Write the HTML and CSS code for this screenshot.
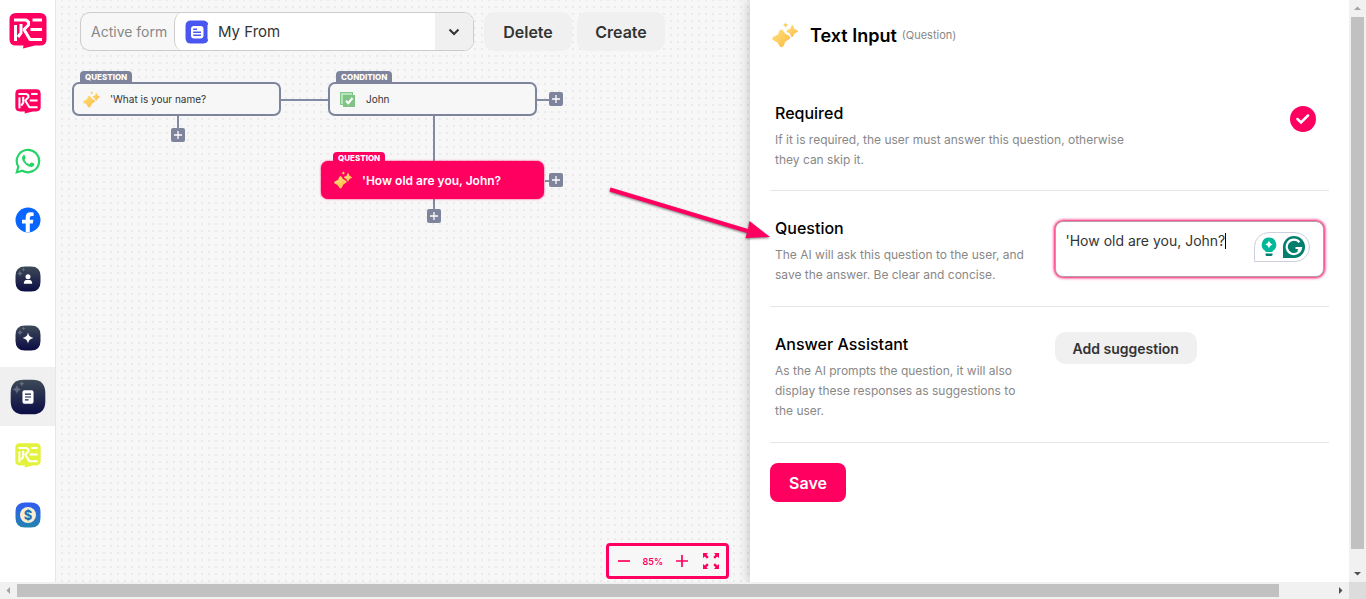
FILE: index.html
```
<!DOCTYPE html>
<html lang="en">
<head>
    <meta charset="UTF-8">
    <meta name="viewport" content="width=device-width, initial-scale=1.0">
    <title>Form Builder</title>
    <link rel="stylesheet" href="styles.css">
</head>
<body>
    <!-- Shared icons -->
    <svg class="sprite" aria-hidden="true">
        <defs>
            <linearGradient id="gold" x1="0" y1="0" x2="1" y2="1">
                <stop offset="0" stop-color="#ffe27a"/>
                <stop offset="1" stop-color="#fcb945"/>
            </linearGradient>
            <linearGradient id="night" x1="0" y1="0" x2="0" y2="1">
                <stop offset="0" stop-color="#3d4a57"/>
                <stop offset="1" stop-color="#0b0c45"/>
            </linearGradient>
            <linearGradient id="ocean" x1="0" y1="0" x2="0" y2="1">
                <stop offset="0" stop-color="#2f5bf5"/>
                <stop offset="1" stop-color="#2383ad"/>
            </linearGradient>
            <symbol id="logo" viewBox="0 0 38 36">
                <path d="M7 0H31Q37.500 0 37.500 6.500V26.500Q37.500 32.500 31 32.500H26L14 35.500L14.500 32.500H7Q.5 32.500 .5 26.500V6.500Q.5 0 7 0Z" fill="currentColor"/>
                <g fill="none" stroke="#fff" stroke-width="3">
                    <polyline points="5,7 17,7 19.500,9 19.500,12 15,16.500 21,26.500 33,26.500" stroke-linejoin="round"/>
                    <polyline points="6.500,12 6.500,28"/>
                    <polyline points="12,11 12,20 9,24"/>
                    <polyline points="33,7 23.500,7"/>
                    <polyline points="21.500,16.500 33,16.500"/>
                </g>
            </symbol>
            <symbol id="sparkles" viewBox="0 0 26 26">
                <path d="M9 7.500Q10 7 11 8.500L13 11.500L17.500 14Q19 15.500 17.500 17L13.500 19.500L11.500 24Q9.500 26.500 7.500 24L5.500 20.500L1 18Q-.5 16.500 1 15L6 12.500L7.500 8.500Z" fill="url(#gold)"/>
                <path d="M20 3Q20.700 2.500 21.300 4L22.500 7L25.500 8.500Q26.500 9.200 25.500 10L22.500 11.500L21 14.500Q20 15.500 19.200 14.500L17.800 11.500L15 10Q14 9 15 8.200L18.200 6.800Z" fill="url(#gold)"/>
                <path d="M13.500 .5L14.500 2L16 3L14.500 4L13.500 5.500L12.500 4L11 3L12.500 2Z" fill="#ffd25e"/>
            </symbol>
            <symbol id="night-tile" viewBox="0 0 26 26">
                <path d="M10 .5H16Q25.500 .5 25.500 10V16Q25.500 25.500 16 25.500H10Q.5 25.500 .5 16V10Q.5 .5 10 .5Z" fill="url(#night)"/>
                <path d="M5 4Q5.300 7.200 8.500 7.500Q5.300 7.800 5 11Q4.700 7.800 1.500 7.500Q4.700 7.200 5 4ZM8.500 1.500Q8.700 3.300 10.500 3.500Q8.700 3.700 8.500 5.500Q8.300 3.700 6.500 3.500Q8.300 3.300 8.500 1.500Z" fill="#fff" opacity=".25"/>
            </symbol>
            <symbol id="plus" viewBox="0 0 14 14">
                <path d="M7 3V11M3 7H11" stroke="currentColor" stroke-width="1.300"/>
            </symbol>
        </defs>
    </svg>

    <div class="window">
        <div class="app">
            <!-- Side navigation -->
            <aside class="sidebar">
                <a class="brand" href="#" aria-label="Home"><svg width="38" height="36"><use href="#logo"/></svg></a>
                <nav class="nav">
                    <a href="#" aria-label="Workspace" class="brand-pink"><svg width="26" height="25"><use href="#logo"/></svg></a>
                    <a href="#" aria-label="WhatsApp">
                        <svg width="26" height="26" viewBox="0 0 26 26">
                            <path d="M1.800 24.300L3.300 18.700A11.200 11.200 0 1 1 7.500 22.800Z" fill="none" stroke="#25d366" stroke-width="2.200"/>
                            <path d="M9 6.800Q7 7.500 7 10C7 14 12.500 19 16.500 19Q19 18.800 19.300 16.500Q19.400 15.800 19 15.600L16.600 14.500Q16.100 14.300 15.700 14.800L14.800 16Q14.500 16.300 14 16.100Q11 15 9.700 12.200Q9.500 11.800 9.800 11.500L10.600 10.500Q10.800 10.200 10.600 9.700L9.700 7.300Q9.500 6.800 9 6.800Z" fill="#25d366"/>
                        </svg>
                    </a>
                    <a href="#" aria-label="Facebook">
                        <svg width="26" height="26" viewBox="0 0 26 26">
                            <circle cx="13" cy="13" r="12.500" fill="#0866ff"/>
                            <path d="M10.700 25.300V16.500H7V12.800H10.700V10.500Q10.700 5.300 15.600 5.300Q17.300 5.300 18.600 5.600V8.900H16.800Q14.800 8.900 14.800 11V12.800H18.400L17.800 16.500H14.800V25.300Z" fill="#fff"/>
                        </svg>
                    </a>
                    <a href="#" aria-label="Contacts">
                        <svg width="26" height="26" viewBox="0 0 26 26">
                            <use href="#night-tile"/>
                            <circle cx="13" cy="10.700" r="2.500" fill="#fff"/>
                            <path d="M8.800 17.800Q8.800 14 11.500 14H14.500Q17.200 14 17.200 17.800Z" fill="#fff"/>
                        </svg>
                    </a>
                    <a href="#" aria-label="Assistant">
                        <svg width="26" height="26" viewBox="0 0 26 26">
                            <use href="#night-tile"/>
                            <path d="M13 7.500Q13.800 12.200 18.500 13Q13.800 13.800 13 18.500Q12.200 13.800 7.500 13Q12.200 12.200 13 7.500Z" fill="#fff"/>
                        </svg>
                    </a>
                    <a href="#" aria-label="Forms" class="active" aria-current="page">
                        <svg width="36" height="36" viewBox="0 0 26 26">
                            <use href="#night-tile"/>
                            <rect x="9" y="8.200" width="8" height="9.600" rx="1.400" fill="#fff"/>
                            <path d="M10.800 10.900H15.200M10.800 13H15.200M10.800 15.100H13.400" stroke="#16204d" stroke-width=".8"/>
                        </svg>
                    </a>
                    <a href="#" aria-label="Brand" class="brand-lime"><svg width="26" height="25"><use href="#logo"/></svg></a>
                    <a href="#" aria-label="Billing">
                        <svg width="26" height="26" viewBox="0 0 26 26">
                            <path d="M10 .5H16Q25.500 .5 25.500 10V16Q25.500 25.500 16 25.500H10Q.5 25.500 .5 16V10Q.5 .5 10 .5Z" fill="url(#ocean)"/>
                            <circle cx="13" cy="13" r="8" fill="#fbedd0"/>
                            <text x="13" y="17.500" text-anchor="middle" class="coin">$</text>
                        </svg>
                    </a>
                </nav>
            </aside>

            <!-- Flow canvas -->
            <main class="canvas">
                <div class="toolbar">
                    <div class="form-picker">
                        <label for="active-form">Active form</label>
                        <div class="picker-field">
                            <svg class="picker-icon" width="24" height="24" viewBox="0 0 24 24">
                                <path d="M6 .5H18Q22 .5 23.300 4Q22 5 22.500 7V17Q22 19 23.300 20Q22 23.500 18 23.500H6Q.5 23.500 .5 18V6Q.5 .5 6 .5Z" fill="#4a56f0"/>
                                <rect x="6" y="6" width="12.500" height="12.500" rx="3" fill="#fff"/>
                                <path d="M8.200 9.300H12M8.200 12.200H16M8.200 15.200H16" stroke="#4a56f0" stroke-width="1.400"/>
                            </svg>
                            <select id="active-form">
                                <option>My From</option>
                            </select>
                            <span class="chevron">
                                <svg width="12" height="8" viewBox="0 0 12 8"><path d="M1.500 1.500L6 6L10.500 1.500" fill="none" stroke="#333" stroke-width="2"/></svg>
                            </span>
                        </div>
                    </div>
                    <button type="button" class="btn">Delete</button>
                    <button type="button" class="btn">Create</button>
                </div>

                <div class="board">
                    <svg class="wires" width="520" height="240" fill="none" stroke="#838aa3" stroke-width="2">
                        <path d="M225 100H272M481 100H493M489 181H493M122 116V128M378 116V161M378 199V209"/>
                    </svg>

                    <div class="node node-name">
                        <span class="tag">QUESTION</span>
                        <svg width="17" height="17"><use href="#sparkles"/></svg>
                        <span>'What is your name?</span>
                    </div>
                    <div class="node node-john">
                        <span class="tag">CONDITION</span>
                        <svg width="17" height="17" viewBox="0 0 17 17">
                            <rect x="1.500" y="1.500" width="12" height="12" fill="#b9e3bd" stroke="#7fca88"/>
                            <rect x="4" y="4" width="12" height="12" fill="#7fc486"/>
                            <path d="M7 9.800L9.300 12.200L13.500 7" fill="none" stroke="#fff" stroke-width="2"/>
                        </svg>
                        <span>John</span>
                    </div>
                    <div class="node node-age selected">
                        <span class="tag">QUESTION</span>
                        <svg width="18" height="18"><use href="#sparkles"/></svg>
                        <span>'How old are you, John?</span>
                    </div>

                    <button type="button" class="add add-name-below" aria-label="Add step"><svg width="14" height="14"><use href="#plus"/></svg></button>
                    <button type="button" class="add add-john-right" aria-label="Add step"><svg width="14" height="14"><use href="#plus"/></svg></button>
                    <button type="button" class="add add-age-right" aria-label="Add step"><svg width="14" height="14"><use href="#plus"/></svg></button>
                    <button type="button" class="add add-age-below" aria-label="Add step"><svg width="14" height="14"><use href="#plus"/></svg></button>
                </div>

                <div class="zoom">
                    <button type="button" aria-label="Zoom out"><svg width="14" height="14" viewBox="0 0 14 14"><path d="M1 7H13" stroke="currentColor" stroke-width="1.700"/></svg></button>
                    <span>85%</span>
                    <button type="button" aria-label="Zoom in"><svg width="14" height="14" viewBox="0 0 14 14"><path d="M1 7H13M7 1V13" stroke="currentColor" stroke-width="1.700"/></svg></button>
                    <button type="button" class="fit" aria-label="Fit to screen">
                        <svg width="16" height="16" viewBox="0 0 16 16">
                            <path d="M0 0H5L3.500 1.800L5.700 4L4 5.700L1.800 3.500L0 5ZM16 0V5L14.200 3.500L12 5.700L10.300 4L12.500 1.800L11 0ZM0 16V11L1.800 12.500L4 10.300L5.700 12L3.500 14.200L5 16ZM16 16H11L12.500 14.200L10.300 12L12 10.300L14.200 12.500L16 11Z" fill="currentColor"/>
                        </svg>
                    </button>
                </div>
            </main>

            <!-- Node settings -->
            <form class="panel">
                <header class="panel-header">
                    <svg width="26" height="26"><use href="#sparkles"/></svg>
                    <h1>Text Input</h1>
                    <small>(Question)</small>
                </header>

                <section class="field field-wide">
                    <div>
                        <h2><label for="required">Required</label></h2>
                        <p>If it is required, the user must answer this question, otherwise they can skip it.</p>
                    </div>
                    <div class="check">
                        <input type="checkbox" id="required" checked>
                        <svg width="14" height="12" viewBox="0 0 14 12"><path d="M1.500 6L5 9.500L12 2.500" fill="none" stroke="#fff" stroke-width="2.500" stroke-linecap="round"/></svg>
                    </div>
                </section>

                <section class="field">
                    <div>
                        <h2><label for="question">Question</label></h2>
                        <p>The AI will ask this question to the user, and save the answer. Be clear and concise.</p>
                    </div>
                    <div class="question-box">
                        <textarea id="question">'How old are you, John?</textarea>
                        <span class="caret"></span>
                        <div class="writing-tools">
                            <svg width="16" height="20" viewBox="0 0 16 20">
                                <path d="M8 .5A7.200 7.200 0 0 1 11.500 14V15H4.500V14A7.200 7.200 0 0 1 8 .5Z" fill="#00b899"/>
                                <path d="M4.500 16.500H11.500V17.500Q11.500 19 10 19H6Q4.500 19 4.500 17.500Z" fill="#007f70"/>
                                <path d="M8 3.800Q8.800 6.700 11.700 7.500Q8.800 8.300 8 11.200Q7.200 8.300 4.300 7.500Q7.200 6.700 8 3.800Z" fill="#fff"/>
                            </svg>
                            <svg width="24" height="24" viewBox="0 0 24 24">
                                <path d="M12 1A11 11 0 1 1 12 23H1V12A11 11 0 0 1 12 1Z" fill="#027e6f"/>
                                <path d="M17.500 7.300A7.200 7.200 0 1 0 19 13H13.500M19 13L16 16" fill="none" stroke="#fff" stroke-width="2.200"/>
                            </svg>
                        </div>
                    </div>
                </section>

                <section class="field">
                    <div>
                        <h2>Answer Assistant</h2>
                        <p>As the AI prompts the question, it will also display these responses as suggestions to the user.</p>
                    </div>
                    <div>
                        <button type="button" class="btn btn-small">Add suggestion</button>
                    </div>
                </section>

                <button type="submit" class="btn btn-save">Save</button>
            </form>

            <svg class="pointer" width="168" height="60" viewBox="0 0 168 60">
                <path d="M3.500 5.500L4.500 1.500L142 43L143.500 35L164 51L139.500 52L141 47Z" fill="#ff0060"/>
            </svg>
        </div>

        <!-- Scroll bars -->
        <div class="scrollbar scrollbar-y">
            <svg width="17" height="17"><path d="M5 10H12L8.500 6.500Z" fill="#a3a3a3"/></svg>
            <div class="track"><div class="thumb"></div></div>
            <svg width="17" height="17"><path d="M5 7H12L8.500 10.500Z" fill="#505050"/></svg>
        </div>
        <div class="scrollbar scrollbar-x">
            <svg width="17" height="17"><path d="M10 5V12L6.500 8.500Z" fill="#a3a3a3"/></svg>
            <div class="track"><div class="thumb"></div></div>
            <svg width="17" height="17"><path d="M7 5V12L10.500 8.500Z" fill="#505050"/></svg>
        </div>
        <div class="corner"></div>
    </div>
</body>
</html>
```
FILE: styles.css
```
/* General Styling */
* {
    box-sizing: border-box;
}

body {
    margin: 0;
    font-family: Inter, sans-serif;
    color: #333;
    background-color: #fff;
}

h1, h2, p {
    margin: 0;
}

button, select, textarea {
    font-family: inherit;
    color: inherit;
}

button {
    padding: 0;
    border: none;
    cursor: pointer;
}

svg {
    display: block;
    flex-shrink: 0;
}

.sprite {
    position: absolute;
    width: 0;
    height: 0;
}

.window {
    display: grid;
    grid-template-columns: 1fr 17px;
    grid-template-rows: 1fr 17px;
    height: 100vh;
}

.app {
    position: relative;
    display: flex;
    min-width: 0;
    overflow: hidden;
}

/* Sidebar */
.sidebar {
    flex: 0 0 56px;
    border-right: 1px solid #e6e6e6;
}

.brand {
    display: flex;
    justify-content: center;
    height: 72px;
    padding-top: 13px;
    color: #ff0060;
}

.nav a {
    display: flex;
    align-items: center;
    justify-content: center;
    height: 59px;
}

.nav .active {
    background-color: #f0f0f0;
}

.nav .brand-pink {
    color: #ff0060;
}

.nav .brand-lime {
    color: #e3f23c;
}

.coin {
    font-size: 13px;
    font-weight: 700;
    fill: #1f6fa8;
}

/* Canvas */
.canvas {
    position: relative;
    display: flex;
    flex-direction: column;
    flex: 1;
    min-width: 0;
    background-color: #f7f7f7;
    background-image: conic-gradient(from 270deg at 2px 2px, #eaeaea 90deg, transparent 0);
    background-size: 7px 7px;
    background-position: 5px 6px;
}

.toolbar {
    display: flex;
    gap: 5px;
    padding: 12px 24px;
}

.form-picker {
    display: flex;
    align-items: center;
    width: 394px;
    height: 39px;
    margin-right: 5px;
    border: 1px solid #ccc;
    border-radius: 10px;
    background-color: #f7f7f7;
    overflow: hidden;
}

.form-picker label {
    width: 93px;
    padding-left: 10px;
    font-size: 14px;
    color: #888;
}

.picker-field {
    display: flex;
    align-items: center;
    flex: 1;
    height: 39px;
    padding-left: 10px;
    border-left: 1px solid #ccc;
    border-radius: 10px;
    background-color: #fff;
}

.picker-field select {
    flex: 1;
    height: 37px;
    padding: 0 9px;
    border: none;
    background-color: #fff;
    font-size: 15px;
    appearance: none;
}

.chevron {
    display: flex;
    align-items: center;
    justify-content: center;
    width: 38px;
    height: 37px;
    background-color: #f0f0f0;
}

.btn {
    min-width: 88px;
    height: 39px;
    border-radius: 10px;
    background-color: #f0f0f0;
    font-size: 16px;
    font-weight: 600;
}

.wires {
    position: absolute;
    top: 0;
    left: 0;
}

.node {
    position: absolute;
    display: flex;
    align-items: center;
    gap: 10px;
    width: 209px;
    height: 34px;
    padding-left: 9px;
    border: 2px solid #7d849c;
    border-radius: 7px;
    background-color: #f7f7f7;
    font-size: 10px;
}

.tag {
    position: absolute;
    left: 6px;
    bottom: 100%;
    height: 13px;
    padding: 0 5px;
    border-radius: 4px 4px 0 0;
    background-color: #7d849c;
    color: #fff;
    font-size: 8px;
    font-weight: 800;
    line-height: 13px;
}

.node-name {
    top: 82px;
    left: 16px;
}

.node-john {
    top: 82px;
    left: 272px;
}

.selected {
    width: 223px;
    height: 38px;
    padding-left: 11px;
    border-color: #ff0060;
    background-color: #ff0060;
    box-shadow: 0 0 2px #ff0060;
    color: #fff;
    font-size: 12px;
    font-weight: 600;
}

.selected .tag {
    left: 10px;
    height: 11px;
    background-color: #ff0060;
}

.node-age {
    top: 161px;
    left: 265px;
}

.add {
    position: absolute;
    width: 14px;
    height: 14px;
    border-radius: 2px;
    background-color: #7d849c;
    color: #fff;
}

.add-name-below {
    top: 128px;
    left: 115px;
}

.add-john-right {
    top: 92px;
    left: 493px;
}

.add-age-right {
    top: 173px;
    left: 493px;
}

.add-age-below {
    top: 209px;
    left: 371px;
}

.zoom {
    position: absolute;
    right: 21px;
    bottom: 3px;
    display: flex;
    align-items: center;
    gap: 12px;
    height: 36px;
    padding: 0 7px 0 8px;
    border: 3px solid #ff0060;
    border-radius: 4px;
    background-color: #f7f7f7;
    color: #ff0060;
    font-size: 9px;
    font-weight: 600;
}

.zoom button {
    background: none;
    color: inherit;
}

.zoom .fit {
    margin-left: 2px;
}

/* Settings Panel */
.panel {
    flex: 0 0 599px;
    position: relative;
    padding: 23px 20px 20px;
    background-color: #fff;
    box-shadow: 0 0 12px rgba(0, 0, 0, 0.25);
}

.panel-header {
    display: flex;
    align-items: center;
    height: 52px;
    padding: 0 2px 28px;
}

.panel-header h1 {
    margin: 0 5px 0 12px;
    color: #000;
    font-size: 18px;
    font-weight: 600;
}

.panel-header small {
    color: #888;
    font-size: 11px;
}

.field {
    display: grid;
    grid-template-columns: 1fr 1fr;
    gap: 10px;
    padding: 25px 5px 21px;
    border-bottom: 1px solid #e6e6e6;
}

.field-wide {
    grid-template-columns: 1fr auto;
    padding: 26px 5px 20px;
}

.field h2 {
    margin-bottom: 5px;
    color: #000;
    font-size: 16px;
    font-weight: 500;
    line-height: 24px;
}

.field p {
    max-width: 256px;
    color: #888;
    font-size: 12px;
    line-height: 20px;
}

.field-wide p {
    max-width: 360px;
}

.check {
    position: relative;
    width: 26px;
    height: 26px;
    margin: 5px 8px 0 0;
}

.check input {
    width: 26px;
    height: 26px;
    margin: 0;
    border-radius: 50%;
    background-color: #ff0060;
    appearance: none;
}

.check svg {
    position: absolute;
    top: 7px;
    left: 6px;
    pointer-events: none;
}

.question-box {
    position: relative;
    height: 56px;
    margin-top: 5px;
}

.question-box textarea {
    display: block;
    width: 100%;
    height: 56px;
    padding: 9px 70px 9px 10px;
    border: 1px solid #b5a0aa;
    border-radius: 8px;
    outline: none;
    box-shadow: 0 0 3px 1px #ff0060;
    font-size: 14px;
    line-height: 20px;
    resize: none;
}

.caret {
    position: absolute;
    top: 12px;
    left: 170px;
    width: 1px;
    height: 16px;
    background-color: #000;
}

.writing-tools {
    position: absolute;
    top: 11px;
    right: 14px;
    display: flex;
    align-items: center;
    gap: 5px;
    height: 30px;
    padding: 0 3px 0 6px;
    border: 1px solid #cdd0dc;
    border-radius: 15px 15px 15px 0;
    background-color: #fff;
}

.btn-small {
    height: 32px;
    padding: 0 18px;
    font-size: 14px;
}

.btn-save {
    min-width: 76px;
    margin-top: 20px;
    border-radius: 8px;
    background-color: #ff0060;
    color: #fff;
}

/* Annotation arrow */
.pointer {
    position: absolute;
    top: 186px;
    left: 606px;
    filter: drop-shadow(0 1px 1px rgba(0, 0, 0, 0.5));
}

/* Scroll bars */
.scrollbar {
    display: flex;
    background-color: #f1f1f1;
}

.scrollbar-y {
    flex-direction: column;
}

.scrollbar .track {
    flex: 1;
}

.scrollbar .thumb {
    background-color: #c1c1c1;
}

.scrollbar-y .thumb {
    width: 13px;
    height: 97%;
    margin: 0 2px;
}

.scrollbar-x .thumb {
    width: 96%;
    height: 13px;
    margin: 2px 0;
}

.corner {
    background-color: #dcdcdc;
}
```
